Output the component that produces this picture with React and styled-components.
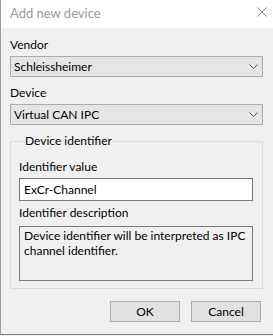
import React from "react";
import styled, { createGlobalStyle } from "styled-components";

const Global = createGlobalStyle`
  html, body { margin: 0; padding: 0; background: #f0f0f0; }
  body { font-family: Lato, "Noto Sans", sans-serif; font-size: 12px; color: #000; }
  * { box-sizing: border-box; }
`;

const Window = styled.div`
  width: 273px;
  height: 335px;
  display: flex;
  flex-direction: column;
  background: #f0f0f0;
  border-left: 1px solid #9a9a9a;
  border-bottom: 1px solid #7a7a7a;
  overflow: hidden;
`;

const TitleBar = styled.div`
  height: 28px;
  flex: none;
  background: #ffffff;
  display: flex;
  align-items: flex-start;
  justify-content: space-between;
  padding: 5px 6px 0 9px;
`;

const Title = styled.span`
  font-size: 13px;
  line-height: 16px;
  color: #9b9b9b;
`;

const CloseIcon = styled.svg`
  width: 10px;
  height: 10px;
  margin-top: 2px;
  display: block;
`;

const Body = styled.div`
  display: flex;
  flex-direction: column;
  padding: 9px 10px 0 9px;
`;

const Label = styled.div`
  line-height: 16px;
  height: 16px;
  margin-top: ${(p) => p.$mt || 0}px;
  white-space: nowrap;
`;

const Combo = styled.div`
  height: 21px;
  margin-top: ${(p) => p.$mt || 0}px;
  background: #e5e5e5;
  border: 1px solid #acacac;
  display: flex;
  align-items: center;
  justify-content: space-between;
  padding: 0 4px 0 3px;
  line-height: 19px;
`;

const Chevron = styled.svg`
  width: 9px;
  height: 5px;
  display: block;
`;

const Group = styled.fieldset`
  margin: 8px 0 0 0;
  padding: 10px 9px 7px 8px;
  border: 1px solid #dcdcdc;
  min-width: 0;
  display: flex;
  flex-direction: column;
`;

const Legend = styled.legend`
  padding: 0 1px;
  margin-left: 5px;
  line-height: 16px;
`;

const TextInput = styled.div`
  height: 23px;
  margin-top: ${(p) => p.$mt || 0}px;
  background: #ffffff;
  border: 1px solid #7a7a7a;
  padding: 1px 4px 0;
  line-height: 19px;
`;

const Description = styled.div`
  height: 55px;
  margin-top: ${(p) => p.$mt || 0}px;
  border: 1px solid #7a7a7a;
  background: #f0f0f0;
  padding: 1px 4px 0;
  line-height: 15px;
`;

const ButtonRow = styled.div`
  display: flex;
  justify-content: flex-end;
  gap: 11px;
  margin-top: 12px;
  padding-right: 2px;
`;

const Button = styled.div`
  width: 70px;
  height: 21px;
  background: #e1e1e1;
  border: 1px solid #adadad;
  display: flex;
  align-items: center;
  justify-content: center;
  line-height: 16px;
`;

const ChevronIcon = () => (
  <Chevron viewBox="0 0 9 5">
    <polyline points="0.5,0.5 4.5,4.5 8.5,0.5" fill="none" stroke="#505050" strokeWidth="1" />
  </Chevron>
);

export default function App() {
  return (
    <>
      <Global />
      <Window>
        <TitleBar>
          <Title>Add new device</Title>
          <CloseIcon viewBox="0 0 10 10">
            <path d="M0.5 0.5 L9.5 9.5 M9.5 0.5 L0.5 9.5" stroke="#8a8a8a" strokeWidth="1" fill="none" />
          </CloseIcon>
        </TitleBar>
        <Body>
          <Label>Vendor</Label>
          <Combo $mt={3}>
            <span>Schleissheimer</span>
            <ChevronIcon />
          </Combo>
          <Label $mt={8}>Device</Label>
          <Combo $mt={3}>
            <span>Virtual CAN IPC</span>
            <ChevronIcon />
          </Combo>
          <Group>
            <Legend>Device identifier</Legend>
            <Label>Identifier value</Label>
            <TextInput $mt={3}>ExCr-Channel</TextInput>
            <Label $mt={4}>Identifier description</Label>
            <Description $mt={5}>
              Device identifier will be interpreted as IPC channel identifier.
            </Description>
          </Group>
          <ButtonRow>
            <Button>OK</Button>
            <Button>Cancel</Button>
          </ButtonRow>
        </Body>
      </Window>
    </>
  );
}
